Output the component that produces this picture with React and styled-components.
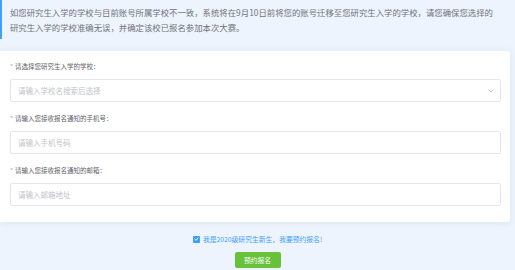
import React from 'react';
import styled, { createGlobalStyle } from 'styled-components';

const GlobalStyle = createGlobalStyle`
  html, body {
    margin: 0;
    padding: 0;
    background: #eef4fd;
    font-family: "Noto Sans CJK SC", "Noto Sans", sans-serif;
  }
`;

const Page = styled.div`
  width: 515px;
  height: 270px;
  overflow: hidden;
  background: #eef4fd;
`;

const Notice = styled.div`
  border-left: 2px solid #409eff;
  padding: 5px 15px 4px 8px;
  font-size: 8.4px;
  line-height: 15px;
  color: #707379;
`;

const Card = styled.div`
  margin: 12px 5px 0 0;
  padding: 10px 9px 16px 10px;
  background: #fff;
  border-radius: 0 3px 3px 0;
  box-shadow: 0 1px 6px rgba(160, 180, 210, 0.25);
  display: flex;
  flex-direction: column;
  gap: 11px;
`;

const Field = styled.div`
  display: flex;
  flex-direction: column;
  gap: 8px;
`;

const Label = styled.div`
  font-size: 6.5px;
  line-height: 10px;
  color: #606266;

  &::before {
    content: '*';
    color: #a0a4ac;
    margin-right: 2px;
  }
`;

const InputBox = styled.div`
  box-sizing: border-box;
  height: 23px;
  border: 1px solid #e4e7ed;
  border-radius: 2px;
  display: flex;
  align-items: center;
  justify-content: space-between;
  padding: 0 6px 0 7px;
  font-size: 7.5px;
  color: #c0c4cc;
`;

const Footer = styled.div`
  display: flex;
  flex-direction: column;
  align-items: center;
  padding-top: 12px;
  gap: 8px;
`;

const CheckRow = styled.label`
  display: flex;
  align-items: center;
  gap: 3px;
  height: 10px;
  font-size: 6.8px;
  color: #409eff;
`;

const CheckBox = styled.span`
  width: 7px;
  height: 7px;
  border-radius: 1px;
  background: #409eff;
  display: flex;
  align-items: center;
  justify-content: center;
`;

const Button = styled.button`
  width: 46px;
  height: 16px;
  border: none;
  border-radius: 2px;
  background: #67c23a;
  color: #fff;
  font-family: inherit;
  font-size: 6.8px;
  padding: 0;
`;

const Arrow = () => (
  <svg width="6" height="4" viewBox="0 0 6 4">
    <path d="M0.8 0.8 L3 3 L5.2 0.8" fill="none" stroke="#c0c4cc" strokeWidth="0.9" />
  </svg>
);

const fields = [
  { label: '请选择您研究生入学的学校：', placeholder: '请输入学校名搜索后选择', select: true },
  { label: '请输入您接收报名通知的手机号：', placeholder: '请输入手机号码' },
  { label: '请输入您接收报名通知的邮箱：', placeholder: '请输入邮箱地址' },
];

export default function App() {
  return (
    <Page>
      <GlobalStyle />
      <Notice>
        如您研究生入学的学校与目前账号所属学校不一致，系统将在9月10日前将您的账号迁移至您研究生入学的学校，请您确保您选择的研究生入学的学校准确无误，并确定该校已报名参加本次大赛。
      </Notice>
      <Card>
        {fields.map((f) => (
          <Field key={f.label}>
            <Label>{f.label}</Label>
            <InputBox>
              <span>{f.placeholder}</span>
              {f.select && <Arrow />}
            </InputBox>
          </Field>
        ))}
      </Card>
      <Footer>
        <CheckRow>
          <CheckBox>
            <svg width="5" height="4" viewBox="0 0 5 4">
              <path d="M0.6 2 L2 3.3 L4.4 0.7" fill="none" stroke="#fff" strokeWidth="0.9" />
            </svg>
          </CheckBox>
          我是2020级研究生新生，我要预约报名!
        </CheckRow>
        <Button>预约报名</Button>
      </Footer>
    </Page>
  );
}
